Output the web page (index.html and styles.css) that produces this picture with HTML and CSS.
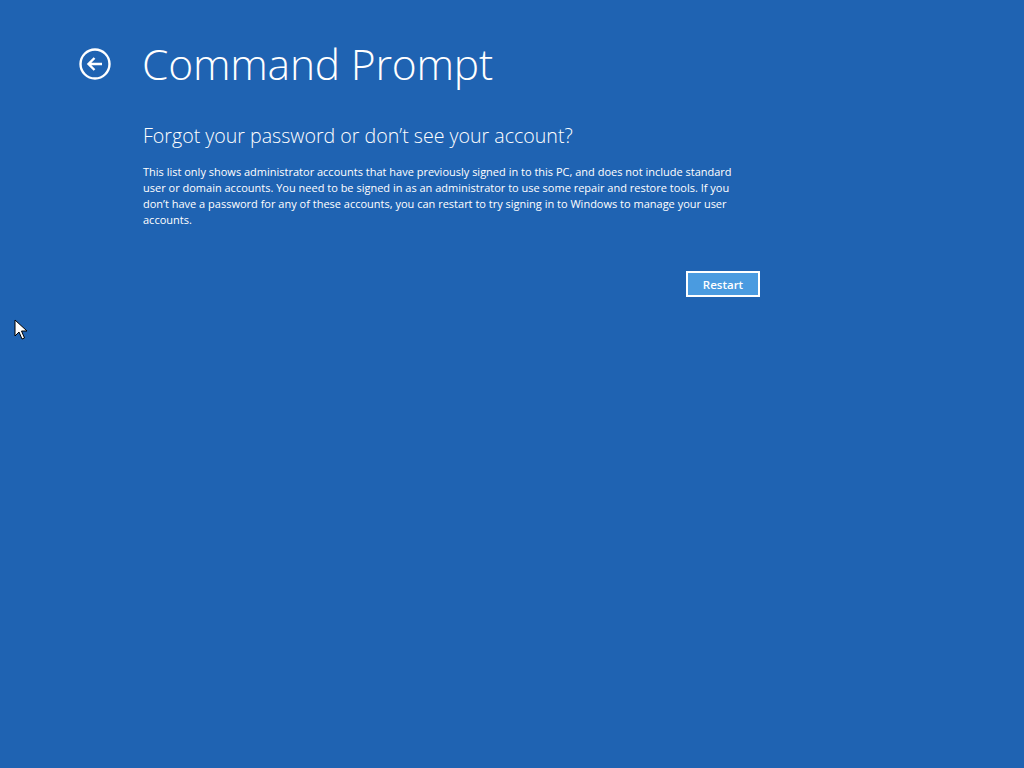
FILE: index.html
```html
<!DOCTYPE html>
<html lang="en">
<head>
  <meta charset="UTF-8">
  <title>Command Prompt</title>
  <link rel="stylesheet" href="styles.css">
</head>
<body>
  <div class="page">
    <header class="title-bar">
      <button class="back" aria-label="Back">
        <svg width="34" height="34" viewBox="0 0 34 34">
          <circle cx="17" cy="17" r="14.5" fill="none" stroke="#fff" stroke-width="2.4"/>
          <path d="M24 17H10.5M16.5 11l-6 6 6 6" fill="none" stroke="#fff" stroke-width="2.4" stroke-linejoin="miter"/>
        </svg>
      </button>
      <h1>Command Prompt</h1>
    </header>
    <section class="content">
      <h2>Forgot your password or don’t see your account?</h2>
      <p>This list only shows administrator accounts that have previously signed in to this PC, and does not include standard
        user or domain accounts. You need to be signed in as an administrator to use some repair and restore tools. If you
        don’t have a password for any of these accounts, you can restart to try signing in to Windows to manage your user
        accounts.</p>
      <div class="actions">
        <button class="btn">Restart</button>
      </div>
    </section>
  </div>
  <svg class="cursor" width="14" height="22" viewBox="0 0 14 22">
    <path d="M1 1v16l4-4 3 7 2.5-1-3-7h5.5z" fill="#fff" stroke="#000" stroke-width="1"/>
  </svg>
</body>
</html>
```

FILE: styles.css
```css
* {
  box-sizing: border-box;
}
html, body {
  margin: 0;
  height: 100%;
}
body {
  background: #1f63b2;
  color: #fff;
  font-family: "Open Sans", "Noto Sans", sans-serif;
  overflow: hidden;
}

.page {
  padding: 31px 0 0 78px;
}

.title-bar {
  display: flex;
  align-items: center;
  gap: 30px;
}
.back {
  width: 34px;
  height: 34px;
  padding: 0;
  border: 0;
  background: none;
  display: flex;
}
.title-bar h1 {
  margin: 0;
  font-size: 42.5px;
  font-weight: 300;
  line-height: 66px;
  letter-spacing: -0.2px;
}

.content {
  padding: 0 3px 0 65px;
  width: 685px;
}
.content h2 {
  margin: 24px 0 0;
  font-size: 19.6px;
  font-weight: 300;
  line-height: 30px;
}
.content p {
  margin: 13px 0 0;
  width: 600px;
  font-size: 11px;
  line-height: 16px;
}

.actions {
  display: flex;
  justify-content: flex-end;
  margin-top: 43px;
}
.btn {
  width: 74px;
  height: 26px;
  border: 2px solid #fff;
  background: #4a9be0;
  color: #fff;
  font-family: "Open Sans", "Noto Sans", sans-serif;
  font-size: 11.5px;
  font-weight: 600;
  padding: 0;
}

.cursor {
  position: absolute;
  left: 14px;
  top: 319px;
}
```
